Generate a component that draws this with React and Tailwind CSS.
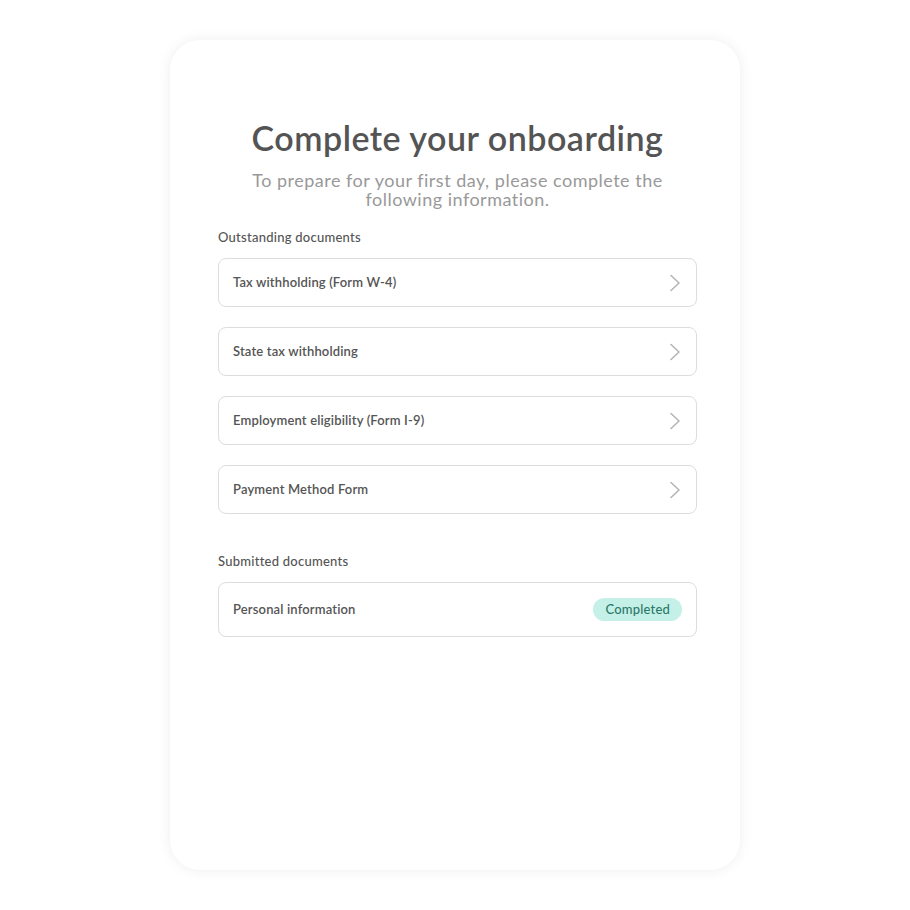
import React from "react";

const outstanding = [
  "Tax withholding (Form W-4)",
  "State tax withholding",
  "Employment eligibility (Form I-9)",
  "Payment Method Form",
];

function Chevron() {
  return (
    <svg width="12" height="18" viewBox="0 0 12 18" fill="none">
      <path d="M2 1.5 L10 9 L2 16.5" stroke="#b3b3b3" strokeWidth="1.5" strokeLinecap="round" strokeLinejoin="round" />
    </svg>
  );
}

export default function App() {
  return (
    <div className="min-h-[910px] w-[910px] bg-white pt-[40px] flex justify-center" style={{ fontFamily: "Lato, 'Open Sans', sans-serif" }}>
      <div className="w-[570px] h-[830px] bg-white rounded-[30px] shadow-[0_0_14px_rgba(0,0,0,0.07)] pl-[48px] pr-[43px] pt-[78px]">
        <h1 className="text-center text-[34px] leading-[40px] font-semibold text-[#545454] tracking-[0.5px]">
          Complete your onboarding
        </h1>
        <p className="mt-[13px] text-center text-[18px] leading-[19px] text-[#999999] tracking-[0.5px] px-[20px]">
          To prepare for your first day, please complete the following information.
        </p>
        <div className="mt-[20px] text-[13px] leading-[16px] text-[#545454] font-medium tracking-[0.25px]">Outstanding documents</div>
        <div className="mt-[13px] flex flex-col gap-[20px]">
          {outstanding.map((t) => (
            <div key={t} className="h-[49px] border border-[#dddddd] rounded-[8px] flex items-center justify-between pl-[14px] pr-[15px]">
              <span className="text-[13px] text-[#555555] font-semibold tracking-[0.15px]">{t}</span>
              <Chevron />
            </div>
          ))}
        </div>
        <div className="mt-[39px] text-[13px] leading-[16px] text-[#545454] font-medium tracking-[0.25px]">Submitted documents</div>
        <div className="mt-[13px] h-[55px] border border-[#dddddd] rounded-[8px] flex items-center justify-between pl-[14px] pr-[14px]">
          <span className="text-[13px] text-[#555555] font-semibold tracking-[0.15px]">Personal information</span>
          <span className="h-[23px] px-[12px] rounded-full bg-[#c5f0e8] text-[#2b7a69] text-[13px] font-medium tracking-[0.2px] flex items-center">Completed</span>
        </div>
      </div>
    </div>
  );
}
